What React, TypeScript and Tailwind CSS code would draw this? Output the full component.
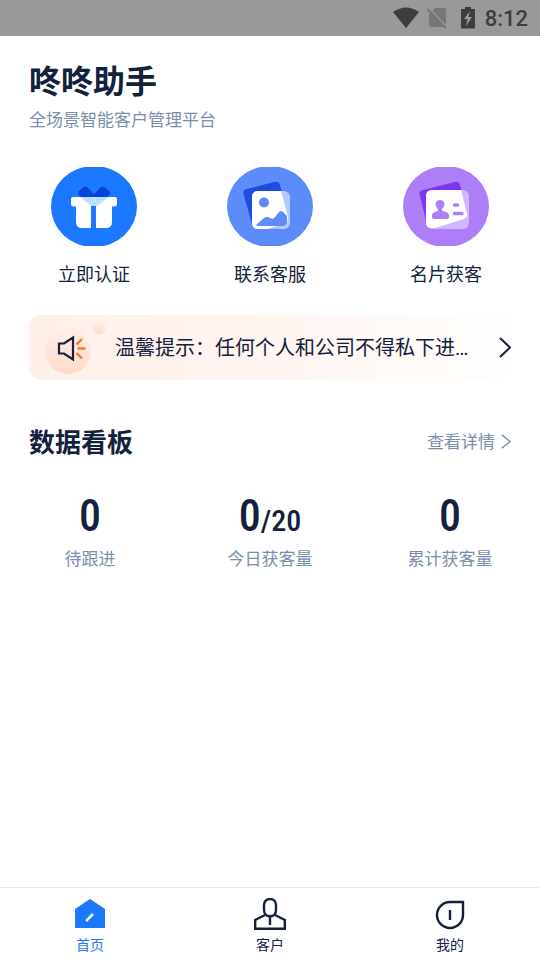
import type { ReactNode } from "react";

function StatusBar() {
  return (
    <header className="flex h-9 items-center justify-end bg-[#999999] pr-3 text-[#3d3d3d]">
      <svg width="26" height="22" viewBox="0 0 26 22" fill="currentColor" aria-hidden="true">
        <path d="M0 5Q13-4 26 5L13 21Z" />
      </svg>
      <svg className="ml-2" width="20" height="22" viewBox="0 0 20 22" aria-hidden="true">
        <path d="M8 1h9q2 0 2 2v15q0 2-2 2H4q-2 0-2-2V7Z" fill="#777777" />
        <path d="M2 1 20 20" stroke="#999999" strokeWidth="1.500" />
        <path d="M0.500 2 19 21" stroke="#777777" strokeWidth="2" />
      </svg>
      <svg className="ml-3.5" width="14" height="22" viewBox="0 0 14 22" aria-hidden="true">
        <path d="M4 0h6v2h4v19.500H0V2h4Z" fill="currentColor" />
        <path d="M9 4 3 12h3.500L5 19l6-9H7.500Z" fill="#999999" />
      </svg>
      <time className="ml-2.5 pt-0.5 font-[Roboto,sans-serif] text-[22px] leading-[34px] font-medium">8:12</time>
    </header>
  );
}

function GiftIcon() {
  return (
    <svg width="86" height="79" viewBox="0 0 86 79" aria-hidden="true">
      <ellipse cx="43" cy="39.500" rx="43" ry="40.500" fill="#1b78ff" />
      <path d="M28 24 33 20q2-1 4 1l6 6 6-6q2-2 4-1l5 4q2 2 0 4l-3 3H31l-3-3q-2-2 0-4Z" fill="#0442dc" />
      <path d="M22 30h42q2 0 2 2v5q0 2.500-3 2.500h-2V55q0 6-6 6H45V39h-5v22h-9q-6 0-6-6V39.500h-2q-3 0-3-2.500v-5q0-2 2-2Z" fill="#fff" />
      <path d="M29 30h29L46 39h-6Z" fill="#b9e2ff" />
    </svg>
  );
}

function PictureIcon() {
  return (
    <svg width="86" height="79" viewBox="0 0 86 79" aria-hidden="true">
      <ellipse cx="43" cy="39.500" rx="43" ry="40.500" fill="#5d8bfa" />
      <path d="M20 22 47 15q5-1 6 3l2 8-29 34-9-31q-2-6 3-7Z" fill="#204be0" />
      <rect x="25" y="24" width="38" height="38" rx="6" fill="#b3c9ff" />
      <path d="M31 24h23l7 26q1 5-4 7l-17 5h-9q-6 0-6-6V30q0-6 6-6Z" fill="#fff" />
      <circle cx="37" cy="35.500" r="5" fill="#5d8bfa" />
      <path d="m29 58 8-7q3-2 6 0 3 2 5-1l4-5q2-2 4 0l4 4v5q0 5-5 5H32q-2 0-3-1Z" fill="#5d8bfa" />
    </svg>
  );
}

function CardIcon() {
  return (
    <svg width="86" height="79" viewBox="0 0 86 79" aria-hidden="true">
      <ellipse cx="43" cy="39.500" rx="43" ry="40.500" fill="#ad7ef7" />
      <path d="m20 23 32-8q4-1 5 3l2 8-35 32-7-29q-2-5 3-6Z" fill="#7d36f5" />
      <rect x="23" y="23" width="43" height="39" rx="6" fill="#d2b6ff" />
      <path d="M29 23h29l6 24q1 3-3 5l-29 9q-9 1-9-5V29q0-6 6-6Z" fill="#fff" />
      <path d="M37 33c6 0 5 7 2 9v2c4 1 7 1 7 5 0 3-1 3-3 3H31c-2 0-2-2-2-3 0-4 3-4 6-5v-2c-3-2-4-9 2-9Z" fill="#ad7ef7" />
      <path d="M51.500 38h3M51.500 46.500H59" stroke="#ad7ef7" strokeWidth="3.500" strokeLinecap="round" />
    </svg>
  );
}

function Shortcut({ icon, label }: { icon: ReactNode; label: string }) {
  return (
    <button type="button" className="flex w-[86px] flex-col items-center gap-3.5">
      {icon}
      <span className="text-[18px] leading-[26px] whitespace-nowrap">{label}</span>
    </button>
  );
}

function SpeakerIcon() {
  return (
    <svg className="shrink-0" width="62" height="54" viewBox="0 0 62 54" aria-hidden="true">
      <defs>
        <linearGradient id="bubble" x1="0" y1="0" x2="0" y2="1">
          <stop offset="0" stopColor="#ffefe8" />
          <stop offset="1" stopColor="#fddacb" />
        </linearGradient>
      </defs>
      <circle cx="23" cy="30" r="23" fill="url(#bubble)" />
      <circle cx="54" cy="7" r="6.500" fill="url(#bubble)" />
      <path d="M14 22.500h5l9-6v22l-9-6h-5Z" fill="none" stroke="#14213d" strokeWidth="2.200" />
      <path d="m31.500 23.500 5.500-5.500M32.500 27.500h8M31.500 32l5.500 5.500" fill="none" stroke="#ff772c" strokeWidth="2.400" />
    </svg>
  );
}

function Chevron({ width, height, stroke }: { width: number; height: number; stroke: number }) {
  return (
    <svg className="shrink-0" width={width} height={height} viewBox="0 0 12 21" preserveAspectRatio="none" fill="none" stroke="currentColor" strokeWidth={stroke} aria-hidden="true">
      <path d="m1 1 10 9.500L1 20" />
    </svg>
  );
}

function Stat({ value, suffix, label }: { value: string; suffix?: string; label: string }) {
  return (
    <div className="flex flex-col items-center">
      <dt className="order-2 text-[17px] leading-[26px] text-[#7c8db0]">{label}</dt>
      <dd className="flex items-baseline font-['Roboto_Condensed',Roboto,sans-serif] text-[44px] leading-[58px] font-medium">
        {value}
        {suffix && <span className="text-[30px] leading-none">{suffix}</span>}
      </dd>
    </div>
  );
}

function HomeIcon() {
  return (
    <svg width="32" height="34" viewBox="0 0 32 34" aria-hidden="true">
      <path d="M16 1 31 11v19H1V11Z" fill="#1b78ff" />
      <path d="m12 23 7-7" stroke="#fff" strokeWidth="2.500" />
    </svg>
  );
}

function CustomerIcon() {
  return (
    <svg width="32" height="34" viewBox="0 0 32 34" fill="none" stroke="#14213d" strokeWidth="2.400" aria-hidden="true">
      <path d="M16 1c4 0 6 3 6 6v4.500c0 4-2 6.700-6 6.700s-6-2.700-6-6.700V7c0-3 2-6 6-6Z" />
      <path d="M11 17 1.200 22v8.800h29.600V22L21 17M16 18v9" />
    </svg>
  );
}

function ProfileIcon() {
  return (
    <svg width="32" height="34" viewBox="0 0 32 34" fill="none" stroke="#14213d" strokeWidth="2.400" aria-hidden="true">
      <path d="M29 4v13a13 13 0 1 1-13-13ZM16 12v10" />
    </svg>
  );
}

function Tab({ icon, label, active = false }: { icon: ReactNode; label: string; active?: boolean }) {
  return (
    <a
      href="#"
      aria-current={active ? "page" : undefined}
      className={active ? "flex flex-col items-center text-[#1b78ff]" : "flex flex-col items-center"}
    >
      {icon}
      <span className="mt-0.5 text-[14px] leading-5">{label}</span>
    </a>
  );
}

export default function App() {
  return (
    <div className="flex min-h-screen flex-col bg-white font-['Noto_Sans_CJK_SC',sans-serif] text-[#14213d]">
      <StatusBar />
      <main className="flex-1">
        <div className="px-[29px] pt-5">
          <h1 className="text-[32px] leading-[46px] font-bold">咚咚助手</h1>
          <p className="mt-1 text-[17px] leading-[26px] text-[#7c8db0]">全场景智能客户管理平台</p>
        </div>

        <div className="mt-[35px] flex justify-between px-[51px]">
          <Shortcut icon={<GiftIcon />} label="立即认证" />
          <Shortcut icon={<PictureIcon />} label="联系客服" />
          <Shortcut icon={<CardIcon />} label="名片获客" />
        </div>

        <div className="mt-[29px] px-[29px]">
          <a href="#" className="flex h-[65px] items-center justify-between rounded-xl bg-linear-to-r from-[#ffefe9] via-[#fff5f1] to-[#fffefd] pl-4">
            <span className="flex items-center gap-2">
              <SpeakerIcon />
              <span className="text-[20px] leading-[30px]">
                温馨提示：任何个人和公司不得私下进
                <span className="font-[Roboto,sans-serif]">…</span>
              </span>
            </span>
            <Chevron width={12} height={21} stroke={2} />
          </a>
        </div>

        <section>
          <div className="mt-[41px] flex items-center justify-between px-[29px]">
            <h2 className="text-[26px] leading-10 font-bold">数据看板</h2>
            <a href="#" className="flex items-center gap-1.5 text-[17px] leading-[26px] text-[#7c8db0]">
              查看详情
              <Chevron width={10} height={15} stroke={2} />
            </a>
          </div>
          <dl className="mt-[26px] grid grid-cols-3">
            <Stat value="0" label="待跟进" />
            <Stat value="0" suffix="/20" label="今日获客量" />
            <Stat value="0" label="累计获客量" />
          </dl>
        </section>
      </main>
      <nav className="grid grid-cols-3 border-t border-[#e6e6e6] pt-2.5 pb-1.5">
        <Tab icon={<HomeIcon />} label="首页" active />
        <Tab icon={<CustomerIcon />} label="客户" />
        <Tab icon={<ProfileIcon />} label="我的" />
      </nav>
    </div>
  );
}
